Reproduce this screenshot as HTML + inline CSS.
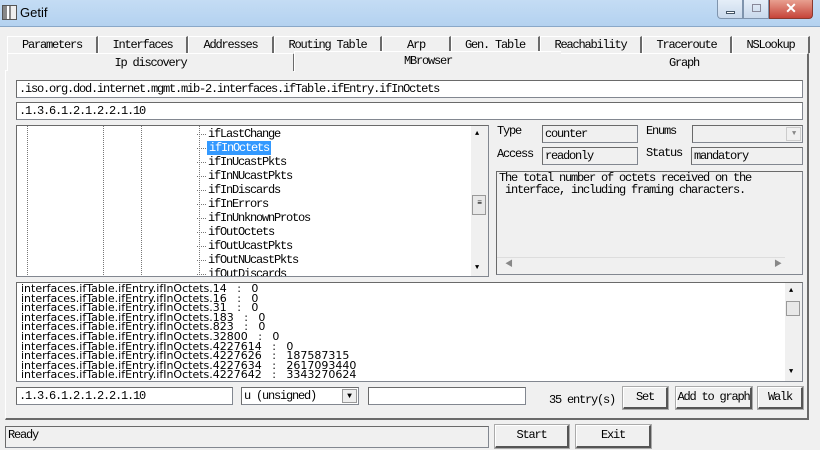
<!DOCTYPE html>
<html><head><style>
*{margin:0;padding:0;box-sizing:border-box}
body{width:820px;height:450px;background:#f0f0f0;position:relative;overflow:hidden;font-family:"Liberation Mono","Noto Sans CJK SC",monospace;font-size:12px;letter-spacing:-1.2px;color:#000}
.a{position:absolute}
.title{left:0;top:0;width:820px;height:27px;background:linear-gradient(#c4dcf4,#b4d2f0);border-bottom:1px solid #8aa8c8}
.tab{position:absolute;height:17px;border:1px solid #fff;border-right:2px solid #6a6a6a;border-bottom:none;text-align:center;line-height:17px;background:#f0f0f0;white-space:nowrap}
.in{position:absolute;background:#fff;border:1px solid #828790;border-top-color:#6a6a6a;border-left-color:#6a6a6a;height:18px;line-height:17px;padding-left:2px;white-space:nowrap;overflow:hidden}
.ro{background:#f0f0f0}
.btn{position:absolute;border:1px solid #fff;border-right:2px solid #555;border-bottom:2px solid #555;outline:1px solid #aaa;text-align:center;background:#f0f0f0;line-height:19px;white-space:nowrap}
.dot{position:absolute;top:126px;height:149px;border-left:1px dotted #777}
.tree div{height:14px;line-height:14px;position:relative}
.tree div:before{content:"";position:absolute;left:-11px;top:7px;width:9px;border-top:1px dotted #777}
.res{font-family:"DejaVu Sans",sans-serif;font-size:11px;letter-spacing:0;line-height:9.6px;white-space:pre}
.sb{position:absolute;background:#f0f0f0}
</style></head><body>
<div class="a title"></div>
<div class="a" style="left:2px;top:5px;width:15px;height:15px;border:1px solid #555;background:linear-gradient(90deg,#888 0 4px,#fff 4px 6px,#888 6px 8px,#eee 8px)"></div>
<div class="a" style="left:20px;top:5px;font-family:'Liberation Sans',sans-serif;font-size:13px;letter-spacing:0">Getif</div>
<div class="a" style="left:717px;top:0;width:26px;height:19px;border:1px solid #7f94ad;border-top:none;border-radius:0 0 0 4px;background:linear-gradient(#e5eef8,#c9d9ec)"><div class="a" style="left:8px;top:11px;width:9px;height:3px;background:#fff;border:1px solid #456"></div></div>
<div class="a" style="left:743px;top:0;width:26px;height:19px;border:1px solid #7f94ad;border-top:none;background:linear-gradient(#e5eef8,#c9d9ec)"><div class="a" style="left:8px;top:4px;width:9px;height:8px;border:1px solid #889"></div></div>
<div class="a" style="left:769px;top:0;width:44px;height:19px;border:1px solid #8a3a30;border-top:none;border-radius:0 0 4px 0;background:linear-gradient(#e8a090,#c6443a);color:#fff;text-align:center;font:bold 14px 'Liberation Sans',sans-serif;line-height:17px;letter-spacing:0">✕</div>

<div class="tab" style="left:7px;top:36px;width:91px">Parameters</div>
<div class="tab" style="left:98px;top:36px;width:90px">Interfaces</div>
<div class="tab" style="left:188px;top:36px;width:86px">Addresses</div>
<div class="tab" style="left:274px;top:36px;width:108px">Routing Table</div>
<div class="tab" style="left:382px;top:36px;width:69px">Arp</div>
<div class="tab" style="left:451px;top:36px;width:89px">Gen. Table</div>
<div class="tab" style="left:540px;top:36px;width:102px">Reachability</div>
<div class="tab" style="left:642px;top:36px;width:90px">Traceroute</div>
<div class="tab" style="left:732px;top:36px;width:78px">NSLookup</div>
<div class="a" style="left:5px;top:70px;width:804px;height:350px;border:1px solid #fff;border-right:2px solid #6a6a6a;border-bottom:2px solid #6a6a6a"></div>
<div class="tab" style="left:7px;top:53px;width:288px;height:18px;line-height:19px">Ip discovery</div>
<div class="tab" style="left:560px;top:53px;width:249px;height:18px;line-height:19px">Graph</div>
<div class="tab" style="left:294px;top:51px;width:267px;height:21px;border-right:none;line-height:18px">MBrowser</div>

<div class="in" style="left:16px;top:80px;width:787px">.iso.org.dod.internet.mgmt.mib-2.interfaces.ifTable.ifEntry.ifInOctets</div>
<div class="in" style="left:16px;top:102px;width:787px">.1.3.6.1.2.1.2.2.1.10</div>

<div class="in" style="left:16px;top:125px;width:473px;height:152px"></div>
<div class="dot" style="left:27px"></div><div class="dot" style="left:103px"></div><div class="dot" style="left:141px"></div><div class="dot" style="left:199px"></div>
<div class="a" style="left:17px;top:126px;width:454px;height:150px;overflow:hidden">
<div class="a tree" style="left:191px;top:1px">
<div>ifLastChange</div><div><span style="background:#3399ff;color:#fff;padding:0 2px;margin-left:-1px">ifInOctets</span></div><div>ifInUcastPkts</div><div>ifInNUcastPkts</div><div>ifInDiscards</div><div>ifInErrors</div><div>ifInUnknownProtos</div><div>ifOutOctets</div><div>ifOutUcastPkts</div><div>ifOutNUcastPkts</div><div>ifOutDiscards</div></div></div>
<div class="sb" style="left:471px;top:126px;width:17px;height:150px"><div class="a" style="left:1px;top:69px;width:14px;height:20px;border:1px solid #999;background:#e8e8e8;font-size:8px;text-align:center;line-height:16px">≡</div><div class="a" style="left:4px;top:4px;font-size:7px">▲</div><div class="a" style="left:4px;top:138px;font-size:7px">▼</div></div>

<div class="a" style="left:497px;top:124px">Type</div>
<div class="in ro" style="left:542px;top:125px;width:96px">counter</div>
<div class="a" style="left:646px;top:124px">Enums</div>
<div class="in ro" style="left:692px;top:125px;width:111px"><div class="a" style="right:1px;top:1px;width:15px;height:14px;border:1px solid #ccc;font-size:7px;text-align:center;line-height:12px;color:#888">▼</div></div>
<div class="a" style="left:497px;top:147px">Access</div>
<div class="in ro" style="left:542px;top:147px;width:96px">readonly</div>
<div class="a" style="left:646px;top:146px">Status</div>
<div class="in ro" style="left:691px;top:147px;width:112px">mandatory</div>
<div class="in ro" style="left:496px;top:171px;width:307px;height:104px;line-height:12px;white-space:pre">The total number of octets received on the
 interface, including framing characters.</div>
<div class="a" style="left:497px;top:257px;width:288px;height:1px;background:#ddd"></div>
<div class="a" style="left:505px;top:258px;font-size:8px;color:#888">◀</div>
<div class="a" style="left:774px;top:258px;font-size:8px;color:#888">▶</div>

<div class="in" style="left:16px;top:282px;width:787px;height:100px"></div>
<div class="a res" style="left:21px;top:284px;height:97px;overflow:hidden">interfaces.ifTable.ifEntry.ifInOctets.14   :   0
interfaces.ifTable.ifEntry.ifInOctets.16   :   0
interfaces.ifTable.ifEntry.ifInOctets.31   :   0
interfaces.ifTable.ifEntry.ifInOctets.183   :   0
interfaces.ifTable.ifEntry.ifInOctets.823   :   0
interfaces.ifTable.ifEntry.ifInOctets.32800   :   0
interfaces.ifTable.ifEntry.ifInOctets.4227614   :   0
interfaces.ifTable.ifEntry.ifInOctets.4227626   :   187587315
interfaces.ifTable.ifEntry.ifInOctets.4227634   :   2617093440
interfaces.ifTable.ifEntry.ifInOctets.4227642   :   3343270624</div>
<div class="sb" style="left:785px;top:283px;width:17px;height:98px"><div class="a" style="left:1px;top:18px;width:14px;height:15px;border:1px solid #999;background:#e8e8e8"></div><div class="a" style="left:4px;top:4px;font-size:7px">▲</div><div class="a" style="left:4px;top:85px;font-size:7px">▼</div></div>

<div class="in" style="left:16px;top:387px;width:217px">.1.3.6.1.2.1.2.2.1.10</div>
<div class="in" style="left:241px;top:387px;width:118px">u (unsigned)<div class="a" style="right:1px;top:1px;width:15px;height:14px;border:1px solid #999;background:#eee;font-size:8px;text-align:center;line-height:13px;letter-spacing:0">▼</div></div>
<div class="in" style="left:368px;top:387px;width:158px"></div>
<div class="a" style="left:549px;top:393px">35 entry(s)</div>
<div class="btn" style="left:623px;top:387px;width:45px;height:22px">Set</div>
<div class="btn" style="left:676px;top:387px;width:76px;height:22px">Add to graph</div>
<div class="btn" style="left:758px;top:387px;width:45px;height:22px">Walk</div>

<div class="in ro" style="left:5px;top:426px;width:484px;height:22px;line-height:16px">Ready</div>
<div class="btn" style="left:495px;top:425px;width:74px;height:23px">Start</div>
<div class="btn" style="left:576px;top:425px;width:75px;height:23px">Exit</div>
</body></html>
